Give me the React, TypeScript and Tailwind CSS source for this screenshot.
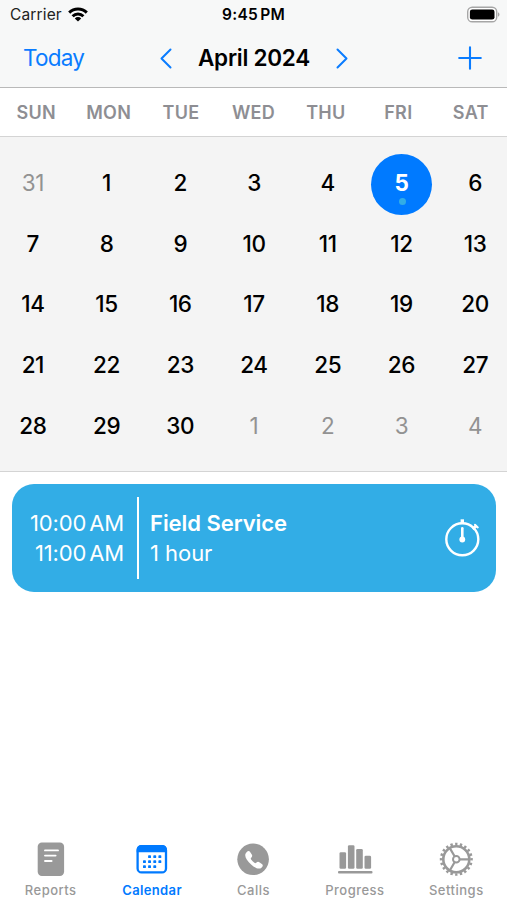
import type { ReactNode } from 'react';
import clsx from 'clsx';

type Day = { day: number; outside?: boolean; selected?: boolean };

const WEEKDAYS = ['SUN', 'MON', 'TUE', 'WED', 'THU', 'FRI', 'SAT'];

const DAYS: Day[] = [
  { day: 31, outside: true },
  ...Array.from({ length: 30 }, (_, i) => ({ day: i + 1, selected: i + 1 === 5 })),
  ...[1, 2, 3, 4].map((day) => ({ day, outside: true })),
];

function StatusBar() {
  return (
    <div className="grid h-[30px] grid-cols-3 items-center text-[15.5px] leading-5">
      <div className="flex items-center gap-[6px] pl-[10px]">
        <span className="tracking-[0.15px] text-[#222]">Carrier</span>
        <svg className="-mt-px" width="20" height="15" viewBox="0 0 20 15" fill="none" stroke="#000" strokeWidth="3">
          <path d="M1.2 5.6a12.6 12.6 0 0 1 17.6 0" />
          <path d="M4.6 9.2a7.7 7.7 0 0 1 10.8 0" />
          <path d="M10 14.6l-3.2-3.2a4.6 4.6 0 0 1 6.4 0z" fill="#000" stroke="none" />
        </svg>
      </div>
      <span className="text-center font-semibold tracking-[0.25px] [word-spacing:-2px]">9:45 PM</span>
      <div className="flex justify-end pr-[7px] pb-[2px]">
        <svg width="34" height="17" viewBox="0 0 34 17">
          <rect x="1.7" y="1.2" width="29" height="14.6" rx="4.6" fill="#fff" stroke="#a6a6a6" strokeWidth="1.4" />
          <rect x="3.9" y="3.4" width="24.6" height="10.2" rx="2.4" fill="#000" />
          <path d="M32 6.3c2 .8 2 3.6 0 4.4z" fill="#a6a6a6" />
        </svg>
      </div>
    </div>
  );
}

function NavBar() {
  return (
    <div className="flex h-[56px] items-center text-[#0a7cff]">
      <button className="w-[160px] pl-[23px] text-left text-[22.5px] tracking-[-0.75px]">Today</button>
      <svg width="12" height="21" viewBox="0 0 12 21" fill="none" stroke="currentColor" strokeWidth="2" strokeLinecap="round" strokeLinejoin="round">
        <path d="M10.5 1.5l-9 9 9 9" />
      </svg>
      <h1 className="w-[164px] text-center text-[22.5px] font-semibold tracking-[-0.25px] text-black">April 2024</h1>
      <svg width="12" height="21" viewBox="0 0 12 21" fill="none" stroke="currentColor" strokeWidth="2" strokeLinecap="round" strokeLinejoin="round">
        <path d="M1.5 1.5l9 9-9 9" />
      </svg>
      <svg className="mr-[25px] ml-auto" width="24" height="24" viewBox="0 0 24 24" stroke="currentColor" strokeWidth="2.1" strokeLinecap="round">
        <path d="M12 1.2v21.6M1.2 12h21.6" />
      </svg>
    </div>
  );
}

function DayCell({ day, outside, selected }: Day) {
  return (
    <div className="flex h-[60.6px] items-center justify-center">
      <div
        className={clsx(
          'flex h-[61px] w-[61px] flex-col items-center pt-[14px] text-[22.5px] leading-[30px] tracking-[-0.4px]',
          outside && 'text-[#929292]',
          selected && 'rounded-full bg-[#007aff] font-bold text-white',
          !outside && !selected && 'font-medium text-black',
        )}
      >
        {day}
        {selected && <span className="ml-[2px] h-[7px] w-[7px] shrink-0 rounded-full bg-[#32ade6]" />}
      </div>
    </div>
  );
}

function EventCard() {
  return (
    <div className="mr-[11px] ml-3 mt-3 flex h-[108px] items-center rounded-[22px] bg-[#32ade6] text-[22px] leading-[30px] text-white">
      <div className="w-[112px] text-right tracking-[-0.15px] [word-spacing:-3px]">
        <p>10:00 AM</p>
        <p>11:00 AM</p>
      </div>
      <div className="ml-[13px] h-[82px] w-[2px] bg-white" />
      <div className="ml-[11px]">
        <p className="font-semibold tracking-[-0.05px]">Field Service</p>
        <p className="tracking-[-0.05px]">1 hour</p>
      </div>
      <svg className="mr-[16px] ml-auto" width="36" height="40" viewBox="0 0 36 40" fill="none" stroke="#fff">
        <circle cx="18.3" cy="21.3" r="16" strokeWidth="2.4" />
        <path d="M18.3 5.5V1.3" strokeWidth="3.4" />
        <path d="M28.6 11l4-3.4" strokeWidth="3" />
        <path d="M31 6.8l2.8 2.6" strokeWidth="2" strokeLinecap="round" />
        <path d="M18.3 10.2v11" strokeWidth="2.6" strokeLinecap="round" />
        <circle cx="18.3" cy="21.5" r="2.9" fill="#fff" stroke="none" />
      </svg>
    </div>
  );
}

const ReportsIcon = () => (
  <svg width="36" height="36" viewBox="0 0 36 36">
    <rect x="4.7" y="0.6" width="26.4" height="33.4" rx="4.2" fill="currentColor" />
    <path d="M12 8.4h13M12 13.6h10.6M12 19h6.6" stroke="#fff" strokeWidth="1.9" strokeLinecap="round" />
  </svg>
);

const CalendarIcon = () => (
  <svg width="36" height="36" viewBox="0 0 36 36">
    <rect x="3.6" y="4.2" width="28.4" height="26.2" rx="4" fill="#fff" stroke="currentColor" strokeWidth="2.3" />
    <path d="M2.7 10.2V7.4a4.4 4.4 0 0 1 4.4-4.4h21.4a4.4 4.4 0 0 1 4.4 4.4v2.8z" fill="currentColor" />
    <g fill="currentColor">
      {[15.1, 20.3, 25.4].map((x) => <rect key={x} x={x - 1} y="13.2" width="2.9" height="2.9" rx="0.7" />)}
      {[10, 15.1, 20.3, 25.4].map((x) => <rect key={x} x={x - 1} y="18.2" width="2.9" height="2.9" rx="0.7" />)}
      {[10, 15.1, 20.3].map((x) => <rect key={x} x={x - 1} y="23.2" width="2.9" height="2.9" rx="0.7" />)}
    </g>
  </svg>
);

const CallsIcon = () => (
  <svg width="36" height="36" viewBox="0 0 36 36">
    <circle cx="18.1" cy="17.3" r="15.8" fill="currentColor" />
    <path
      d="M11.6 10.2c1.5-1.5 2.6-1.5 3.7.1l1.3 1.9c.9 1.4.8 2.2-.4 3.5-.6.6-.6 1-.1 1.8a17 17 0 0 0 3.3 3.3c.8.6 1.2.6 1.8 0 1.3-1.2 2.1-1.3 3.5-.4l1.8 1.3c1.7 1.1 1.7 2.2.2 3.7-2.2 2.2-5.8 1.3-10.3-2.7-5.3-4.7-8-9.6-4.8-12.5z"
      fill="#fff"
    />
  </svg>
);

const ProgressIcon = () => (
  <svg width="36" height="36" viewBox="0 0 36 36" fill="currentColor">
    <rect x="2.5" y="10.3" width="6.6" height="16.4" rx="1.3" />
    <rect x="10.9" y="3.3" width="6.6" height="23.4" rx="1.3" />
    <rect x="19.2" y="7" width="6.6" height="19.7" rx="1.3" />
    <rect x="27.5" y="13.7" width="6.6" height="13" rx="1.3" />
    <rect x="1" y="29" width="34.5" height="2.6" rx="1" />
  </svg>
);

const SettingsIcon = () => (
  <svg width="36" height="36" viewBox="0 0 36 36" fill="none" stroke="currentColor">
    <circle cx="18.3" cy="17.3" r="13" strokeWidth="2.6" />
    {/* 20 teeth around the rim */}
    <circle cx="18.3" cy="17.3" r="15.2" strokeWidth="2.6" pathLength="40" strokeDasharray="1 1" strokeDashoffset="0.5" />
    <circle cx="18.3" cy="17.3" r="3.3" strokeWidth="2" />
    <path d="M21.8 17.3h8.5M16.6 14.3l-4.8-8.2M16.6 20.3l-4.8 8.2" strokeWidth="2.2" />
  </svg>
);

const TABS: { label: string; icon: ReactNode; active?: boolean }[] = [
  { label: 'Reports', icon: <ReportsIcon /> },
  { label: 'Calendar', icon: <CalendarIcon />, active: true },
  { label: 'Calls', icon: <CallsIcon /> },
  { label: 'Progress', icon: <ProgressIcon /> },
  { label: 'Settings', icon: <SettingsIcon /> },
];

function TabBar() {
  return (
    <nav className="mt-auto grid h-[60px] grid-cols-5">
      {TABS.map((tab) => (
        <div
          key={tab.label}
          className={clsx(
            'flex flex-col items-center pt-[2px] text-[13px] leading-4',
            tab.active ? 'font-semibold tracking-[0.35px] text-[#007aff]' : 'font-medium tracking-[0.5px] text-[#999]',
          )}
        >
          {tab.icon}
          <span className="mt-[4px]">{tab.label}</span>
        </div>
      ))}
    </nav>
  );
}

export default function App() {
  return (
    <div className="flex h-[900px] w-[507px] flex-col overflow-hidden bg-white font-['Inter',sans-serif] text-black">
      <header className="h-[88px] border-b border-[#b9b9b9] bg-[#f7f8f8]">
        <StatusBar />
        <NavBar />
      </header>
      <div className="grid h-[48px] grid-cols-7 items-center text-center text-[18px] font-semibold tracking-[0.3px] text-[#8e8e93]">
        {WEEKDAYS.map((name) => (
          <span key={name}>{name}</span>
        ))}
      </div>
      <section className="h-[336px] border-y border-[#d4d4d4] bg-[#f4f4f4] pt-[17.5px]">
        <div className="-mr-[5px] -ml-1 grid grid-cols-7">
          {DAYS.map((d, i) => (
            <DayCell key={i} {...d} />
          ))}
        </div>
      </section>
      <EventCard />
      <TabBar />
    </div>
  );
}
